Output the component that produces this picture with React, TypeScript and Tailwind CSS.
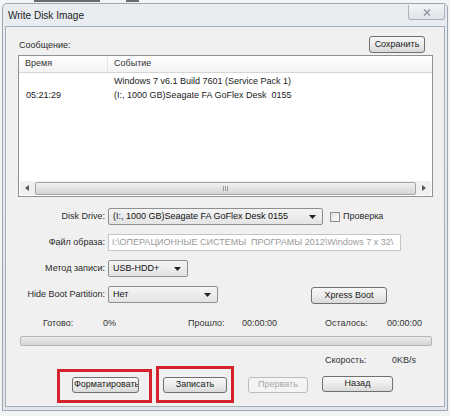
import React from "react";

function Btn({
  children,
  className = "",
  disabled = false,
}: {
  children: React.ReactNode;
  className?: string;
  disabled?: boolean;
}) {
  return (
    <div
      className={`flex items-center justify-center overflow-hidden whitespace-nowrap rounded-[3px] border text-[9px] ${
        disabled
          ? "border-[#b9bdc1] bg-[#f4f4f4] text-[#a8a8a8]"
          : "border-[#707070] bg-gradient-to-b from-[#f7f7f7] via-[#ececec] to-[#d9d9d9] text-[#1a1a1a]"
      } ${className}`}
    >
      {children}
    </div>
  );
}

function Combo({ text, className = "" }: { text: string; className?: string }) {
  return (
    <div
      className={`flex h-[17px] items-center rounded-[2px] border border-[#8e8f8f] bg-gradient-to-b from-[#f4f4f4] to-[#e4e4e4] pl-[4px] pr-[6px] text-[9px] text-[#111] ${className}`}
    >
      <span className="flex-1 overflow-hidden whitespace-nowrap">{text}</span>
      <svg width="7" height="4" viewBox="0 0 7 4" className="shrink-0">
        <path d="M0 0 L7 0 L3.5 4 Z" fill="#222" />
      </svg>
    </div>
  );
}

function Label({ children }: { children: React.ReactNode }) {
  return (
    <div className="w-[87px] shrink-0 whitespace-nowrap text-right text-[9px] text-[#2a2a2a]">
      {children}
    </div>
  );
}

export default function App() {
  return (
    <div className="relative flex h-[416px] w-[450px] flex-col overflow-hidden bg-[#f3f4f5] font-['Liberation_Sans',Arial,sans-serif]">
      {/* glimpse of content behind the window */}
      <div className="flex h-[3px] shrink-0 items-start gap-[26px] pl-[34px]">
        <div className="h-[2px] w-[66px] bg-[#6a6a6a]" />
        <div className="h-[2px] w-[13px] bg-[#6a6a6a]" />
      </div>

      {/* window */}
      <div className="ml-[2px] flex h-[408px] w-[446px] flex-col rounded-t-[5px] border border-[#9aa6b2] bg-gradient-to-b from-[#e9edf1] to-[#e2e6ea]">
        {/* title bar */}
        <div className="flex h-[22px] shrink-0 items-start justify-between">
          <div className="ml-[5px] mt-[4px] text-[10px] text-[#1b1b1b]">Write Disk Image</div>
          <div className="mr-[2px] mt-[1px] flex h-[15px] w-[37px] items-center justify-center rounded-b-[3px] border border-t-0 border-[#a9b3bd] bg-gradient-to-b from-[#f2f4f6] to-[#dfe3e7]">
            <svg width="8" height="7" viewBox="0 0 8 7">
              <path d="M1 0.5 L7 6.5 M7 0.5 L1 6.5" stroke="#8b939b" strokeWidth="1.3" />
            </svg>
          </div>
        </div>

        {/* client area */}
        <div className="mx-[2px] mb-[3px] flex flex-1 flex-col border border-[#a5afb9] bg-[#f0f0f0] pl-[12px] pr-[11px]">
          {/* message header */}
          <div className="mt-[9px] flex h-[17px] items-end justify-between">
            <div className="mb-[1px] ml-[1px] text-[9px] text-[#2a2a2a]">Сообщение:</div>
            <Btn className="mr-[8px] h-[17px] w-[56px]">Сохранить</Btn>
          </div>

          {/* list view */}
          <div className="mt-[2px] flex h-[142px] flex-col border border-[#8e9298] bg-white">
            <div className="flex h-[17px] shrink-0 items-center border-b border-[#d5d5d5] bg-gradient-to-b from-[#ffffff] to-[#f3f3f3] text-[9px] text-[#333]">
              <div className="w-[89px] border-r border-[#e3e3e3] pl-[6px]">Время</div>
              <div className="pl-[6px]">Событие</div>
            </div>
            <div className="mt-[2px] flex h-[14px] items-center text-[9px] text-[#222]">
              <div className="w-[95px] pl-[7px]"></div>
              <div>Windows 7 v6.1 Build 7601 (Service Pack 1)</div>
            </div>
            <div className="flex h-[14px] items-center text-[9px] text-[#222]">
              <div className="w-[95px] pl-[7px]">05:21:29</div>
              <div className="whitespace-pre">(I:, 1000 GB)Seagate FA GoFlex Desk  0155</div>
            </div>
            <div className="flex-1" />
            {/* horizontal scrollbar */}
            <div className="mb-[1px] ml-[1px] mr-[1px] flex h-[14px] items-center bg-[#f0f0f0]">
              <div className="flex h-[14px] w-[14px] items-center justify-center">
                <svg width="4" height="6" viewBox="0 0 4 6">
                  <path d="M4 0 L0 3 L4 6 Z" fill="#555" />
                </svg>
              </div>
              <div className="mx-[1px] flex h-[13px] flex-1 items-center justify-center rounded-[2px] border border-[#a4a4a4] bg-gradient-to-b from-[#f1f1f1] to-[#d6d6d6]">
                <div className="flex gap-[1px]">
                  <div className="h-[5px] w-[1px] bg-[#9a9a9a]" />
                  <div className="h-[5px] w-[1px] bg-[#9a9a9a]" />
                  <div className="h-[5px] w-[1px] bg-[#9a9a9a]" />
                </div>
              </div>
              <div className="flex h-[14px] w-[14px] items-center justify-center">
                <svg width="4" height="6" viewBox="0 0 4 6">
                  <path d="M0 0 L4 3 L0 6 Z" fill="#555" />
                </svg>
              </div>
            </div>
          </div>

          {/* Disk Drive */}
          <div className="mt-[11px] flex h-[17px] items-center">
            <Label>Disk Drive:</Label>
            <Combo
              className="ml-[3px] w-[215px]"
              text="(I:, 1000 GB)Seagate FA GoFlex Desk  0155"
            />
            <div className="ml-[7px] h-[10px] w-[10px] border border-[#8f8f8f] bg-gradient-to-br from-[#e2e2e2] to-[#fbfbfb]" />
            <div className="ml-[3px] text-[9px] text-[#2a2a2a]">Проверка</div>
          </div>

          {/* image file */}
          <div className="mt-[9px] flex h-[17px] items-center">
            <Label>Файл образа:</Label>
            <div className="ml-[3px] flex h-[17px] w-[293px] items-center overflow-hidden whitespace-pre border border-[#c2c6ca] bg-white pl-[3px] text-[9px] text-[#9a9a9a]">
              I:\ОПЕРАЦИОННЫЕ СИСТЕМЫ  ПРОГРАМЫ 2012\Windows 7 x 32\
            </div>
          </div>

          {/* write method */}
          <div className="mt-[9px] flex h-[17px] items-center">
            <Label>Метод записи:</Label>
            <Combo className="ml-[3px] w-[80px]" text="USB-HDD+" />
          </div>

          {/* hide boot partition */}
          <div className="mt-[9px] flex h-[17px] items-center">
            <Label>Hide Boot Partition:</Label>
            <Combo className="ml-[3px] w-[110px]" text="Нет" />
            <Btn className="ml-[93px] mt-[2px] h-[17px] w-[76px]">Xpress Boot</Btn>
          </div>

          {/* stats */}
          <div className="mt-[15px] flex h-[12px] items-center whitespace-nowrap text-[9px] text-[#333]">
            <div className="ml-[25px] w-[60px]">Готово:</div>
            <div className="w-[85px]">0%</div>
            <div className="w-[54px]">Прошло:</div>
            <div className="w-[83px]">00:00:00</div>
            <div className="w-[62px]">Осталось:</div>
            <div>00:00:00</div>
          </div>

          {/* progress bar */}
          <div className="ml-[2px] mr-[1px] mt-[6px] h-[10px] rounded-[2px] border border-[#b4b4b4] bg-gradient-to-b from-[#ececec] via-[#e1e1e1] to-[#d6d6d6]" />

          {/* speed */}
          <div className="mt-[9px] flex h-[12px] items-center whitespace-nowrap text-[9px] text-[#333]">
            <div className="ml-[307px] w-[67px]">Скорость:</div>
            <div>0KB/s</div>
          </div>

          {/* buttons */}
          <div className="mt-[10px] flex h-[16px] items-center">
            <Btn className="ml-[54px] h-[16px] w-[67px] !justify-start pl-[1px]">Форматировать</Btn>
            <Btn className="ml-[24px] h-[16px] w-[64px]">Записать</Btn>
            <Btn disabled className="ml-[21px] h-[16px] w-[60px]">
              Прервать
            </Btn>
            <Btn className="ml-[14px] -mt-[2px] h-[16px] w-[71px]">Назад</Btn>
          </div>
        </div>
      </div>

      {/* red annotation rectangles */}
      <div className="pointer-events-none absolute left-[57px] top-[369px] h-[34px] w-[95px] border-[3px] border-[#d3222b]" />
      <div className="pointer-events-none absolute left-[156px] top-[366px] h-[37px] w-[78px] border-[3px] border-[#d3222b]" />
    </div>
  );
}
